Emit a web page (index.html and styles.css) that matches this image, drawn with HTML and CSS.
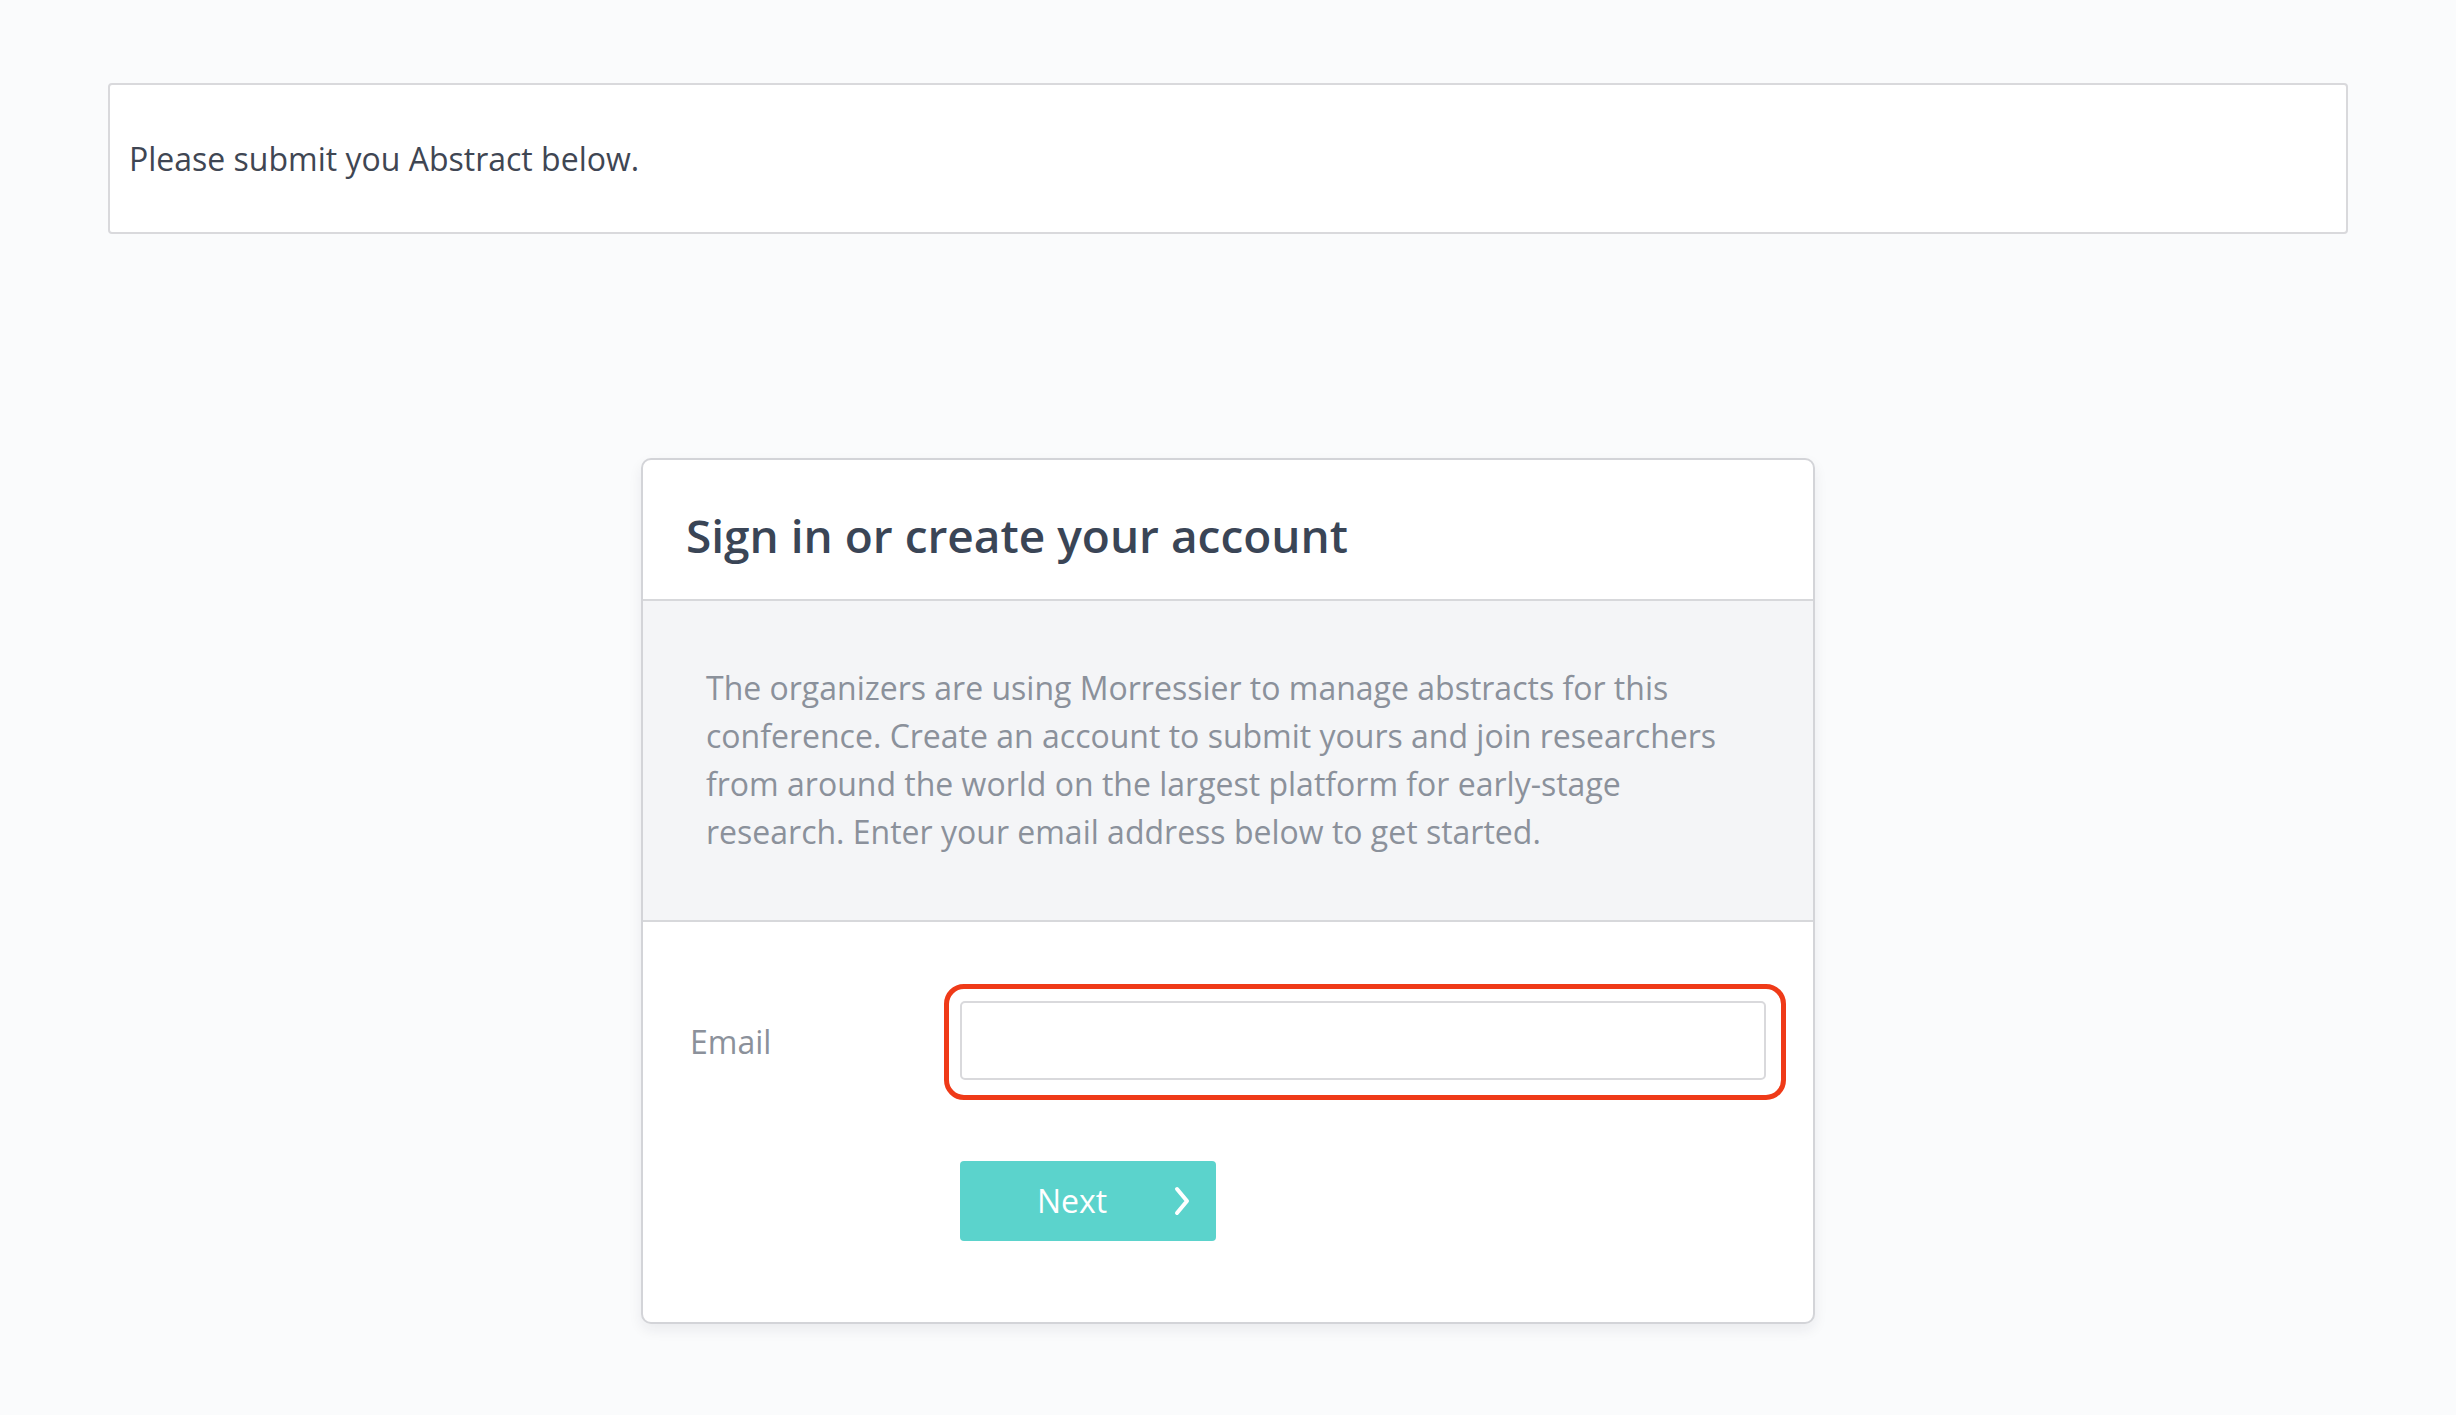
FILE: index.html
```html
<!DOCTYPE html>
<html lang="en">
<head>
<meta charset="utf-8">
<title>Submit Abstract</title>
<link rel="stylesheet" href="styles.css">
</head>
<body>
<div class="page">
  <div class="notice">Please submit you Abstract below.</div>

  <div class="card">
    <div class="card-header">
      <h1 class="card-title">Sign in or create your account</h1>
    </div>
    <div class="card-intro">
      <p>The organizers are using Morressier to manage abstracts for this conference. Create an account to submit yours and join researchers from around the world on the largest platform for early-stage research. Enter your email address below to get started.</p>
    </div>
    <form class="card-form" onsubmit="return false">
      <div class="form-row">
        <label class="form-label" for="email">Email</label>
        <div class="field">
          <input class="field-input" id="email" type="email">
          <span class="field-highlight"></span>
        </div>
      </div>
      <div class="form-row form-actions">
        <span></span>
        <button class="btn-next" type="submit">
          <span class="btn-text">Next</span>
          <svg class="btn-icon" width="18" height="30" viewBox="0 0 18 30" aria-hidden="true">
            <path d="M4 3 L14 15 L4 27" fill="none" stroke="#ffffff" stroke-width="4" stroke-linecap="round" stroke-linejoin="round"/>
          </svg>
        </button>
      </div>
    </form>
  </div>
</div>
</body>
</html>
```

FILE: styles.css
```css
* {
  box-sizing: border-box;
}

html, body {
  margin: 0;
  padding: 0;
}

body {
  background: #fafbfc;
  font-family: "Open Sans", "Noto Sans", "Liberation Sans", sans-serif;
  color: #3d4451;
  min-height: 1415px;
}

.page {
  padding: 83px 108px 0 108px;
}

.notice {
  height: 151px;
  display: flex;
  align-items: center;
  padding: 0 19px;
  background: #ffffff;
  border: 2px solid #d9d9dc;
  border-radius: 4px;
  font-size: 32px;
  color: #3f4653;
}

.card {
  width: 1174px;
  margin: 224px auto 0 auto;
  background: #ffffff;
  border: 2px solid #d3d4d8;
  border-radius: 10px;
  box-shadow: 0 6px 14px rgba(30, 35, 50, 0.07);
  overflow: hidden;
}

.card-header {
  height: 141px;
  padding: 0 43px;
  display: flex;
  align-items: center;
  border-bottom: 2px solid #d7d8db;
}

.card-title {
  margin: 0;
  padding-top: 10px;
  font-size: 46px;
  font-weight: 600;
  color: #3a4556;
  letter-spacing: 0;
}

.card-intro {
  background: #f4f5f7;
  padding: 63px 63px 64px 63px;
  border-bottom: 2px solid #d7d8db;
}

.card-intro p {
  margin: 0;
  font-size: 32px;
  line-height: 48px;
  color: #8b919b;
}

.card-form {
  padding: 79px 47px 81px 47px;
  display: flex;
  flex-direction: column;
  gap: 81px;
}

.form-row {
  display: grid;
  grid-template-columns: 270px 806px;
  align-items: center;
}

.form-label {
  font-size: 32px;
  color: #8b919b;
  padding-top: 2px;
}

.field {
  position: relative;
  height: 79px;
}

.field-input {
  display: block;
  width: 100%;
  height: 79px;
  border: 2px solid #d9d9dc;
  border-radius: 5px;
  background: #ffffff;
  font-family: inherit;
  font-size: 30px;
  padding: 0 18px;
  outline: none;
}

.field-highlight {
  position: absolute;
  left: -16px;
  right: -20px;
  top: -17px;
  bottom: -20px;
  border: 5px solid #ef3a18;
  border-radius: 20px;
  pointer-events: none;
}

.form-actions {
  align-items: start;
}

.btn-next {
  width: 256px;
  height: 80px;
  display: flex;
  align-items: center;
  justify-content: space-between;
  padding: 0 25px 0 77px;
  background: #5bd3cc;
  border: none;
  border-radius: 4px;
  color: #ffffff;
  font-family: inherit;
  font-size: 32px;
  cursor: pointer;
}

.btn-text {
  line-height: 1;
}

.btn-icon {
  display: block;
}
```
